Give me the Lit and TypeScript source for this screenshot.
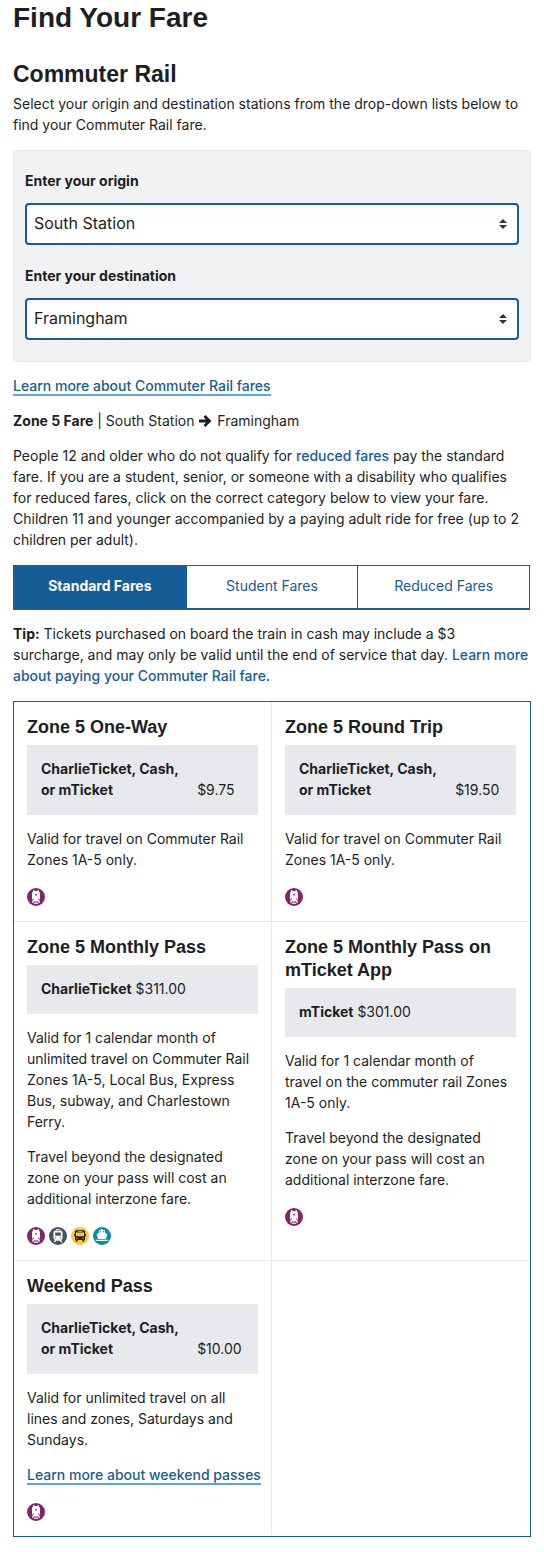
import { LitElement, html, css, svg, TemplateResult } from "lit";
import { customElement, property, state } from "lit/decorators.js";

type Mode = "rail" | "subway" | "bus" | "ferry";

interface Fare {
  name: string;
  media: string;
  price: string;
  split: boolean;
  text: string[];
  link?: string;
  modes: Mode[];
}

const FARES: Fare[] = [
  {
    name: "Zone 5 One-Way",
    media: "CharlieTicket, Cash, or mTicket",
    price: "$9.75",
    split: true,
    text: ["Valid for travel on Commuter Rail Zones 1A-5 only."],
    modes: ["rail"],
  },
  {
    name: "Zone 5 Round Trip",
    media: "CharlieTicket, Cash, or mTicket",
    price: "$19.50",
    split: true,
    text: ["Valid for travel on Commuter Rail Zones 1A-5 only."],
    modes: ["rail"],
  },
  {
    name: "Zone 5 Monthly Pass",
    media: "CharlieTicket",
    price: "$311.00",
    split: false,
    text: [
      "Valid for 1 calendar month of unlimited travel on Commuter Rail Zones 1A-5, Local Bus, Express Bus, subway, and Charlestown Ferry.",
      "Travel beyond the designated zone on your pass will cost an additional interzone fare.",
    ],
    modes: ["rail", "subway", "bus", "ferry"],
  },
  {
    name: "Zone 5 Monthly Pass on mTicket App",
    media: "mTicket",
    price: "$301.00",
    split: false,
    text: [
      "Valid for 1 calendar month of travel\u00a0on the commuter rail Zones 1A-5 only.",
      "Travel beyond the designated zone on your pass will cost an additional interzone fare.",
    ],
    modes: ["rail"],
  },
  {
    name: "Weekend Pass",
    media: "CharlieTicket, Cash, or mTicket",
    price: "$10.00",
    split: true,
    text: ["Valid for unlimited travel on all lines and zones, Saturdays and Sundays."],
    link: "Learn more about weekend passes",
    modes: ["rail"],
  },
];

const GLYPHS: Record<Mode, { label: string; color: string; art: TemplateResult }> = {
  rail: {
    label: "Commuter Rail",
    color: "#80276c",
    art: svg`
      <path fill="#fff" d="M6 2.300h1.500v.7h3v-.7H12v1.200l1 1.500v5.500l-.8 1.300.8 3h-1.400l-.5-1.600H6.900l-.5 1.600H5l.8-3-.8-1.300V5l1-1.500z"/>
      <path fill="#fff" d="M7.300 13.800h3.400v.8H7.300zM6.800 15.300h4.400v.8H6.800z"/>
      <path fill="#80276c" d="M8.200 6h1.600v1.600H8.200zM6 10.500h.9v.9H6zM11.100 10.500h.9v.9h-.9z"/>`,
  },
  subway: {
    label: "Subway",
    color: "#494f5c",
    art: svg`
      <path fill="#fff" d="M7 2.200h4v1.300h1.300L13.500 5v6.600l-1.300 1.300 1.300 2.300h-1.600l-.9-1.500H7l-.9 1.500H4.500l1.300-2.300-1.300-1.300V5l1.200-1.500H7z"/>
      <path fill="#494f5c" d="M7.600 3.200h2.800v.8H7.600zM6.200 5.500h5.600v3.300H6.200zM5.900 10.200h1.200v1.100H5.900zM10.900 10.200h1.200v1.100h-1.200z"/>`,
  },
  bus: {
    label: "Bus",
    color: "#ffc72c",
    art: svg`
      <path fill="#1c1e23" d="M5 3.200h8l1 1.100V6.500h.7v3H14V13h-.7v1.600h-2V13H6.700v1.600h-2V13H4V9.500h-.7v-3H4V4.300z"/>
      <path fill="#ffc72c" d="M6.500 4h5v.7h-5zM5 5.600h8v3.600H5zM5.200 10.800h1.300v1H5.200zM11.500 10.800h1.300v1h-1.300z"/>`,
  },
  ferry: {
    label: "Ferry",
    color: "#008eaa",
    art: svg`
      <path fill="#fff" d="M8 2h2v1.200h2v2.700l2.300 1-1.300 5H5l-1.300-5 2.300-1V3.200h2zM2.800 12.700h12.400v1.400H2.800z"/>
      <path fill="#008eaa" d="M7 4.200h1.200v1H7zM9.800 4.200H11v1H9.800z"/>`,
  },
};

@customElement("mode-icon")
class ModeIcon extends LitElement {
  static styles = css`
    :host {
      display: block;
      width: 18px;
      height: 18px;
    }
    .icon {
      display: block;
      width: 100%;
      height: 100%;
    }
  `;

  @property() mode: Mode = "rail";

  render() {
    const g = GLYPHS[this.mode];
    return html`<svg class="icon" viewBox="0 0 18 18" role="img" aria-label=${g.label}>
      <circle cx="9" cy="9" r="9" fill=${g.color}></circle>
      ${g.art}
    </svg>`;
  }
}

@customElement("fare-card")
class FareCard extends LitElement {
  static styles = css`
    :host {
      display: block;
      padding: 14px 13px 15px;
    }
    .name {
      margin: 0 0 6px;
      font: bold 18px/23px "Liberation Sans", Arial, sans-serif;
    }
    .price {
      margin-bottom: 13px;
      padding: 13px 14px 15px;
      background: #e8e9ed;
    }
    .price.split {
      display: grid;
      grid-template-columns: 10fr 3fr;
      align-items: end;
    }
    .media {
      font-weight: 700;
    }
    .split .media {
      padding-right: 14px;
    }
    .text {
      margin: 0 0 14px;
    }
    .link {
      color: #165c96;
      font-weight: 500;
      text-decoration: none;
      white-space: nowrap;
      box-shadow: 0 2px #5aa5e6;
    }
    .modes {
      display: flex;
      gap: 4px;
      margin-top: 18px;
    }
  `;

  @property({ attribute: false }) fare!: Fare;

  render() {
    const f = this.fare;
    return html`
      <h3 class="name">${f.name}</h3>
      <div class="price ${f.split ? "split" : ""}">
        <span class="media">${f.media}</span>
        <span>${f.price}</span>
      </div>
      ${f.text.map((t) => html`<p class="text">${t}</p>`)}
      ${f.link ? html`<p class="text"><a class="link" href="#weekend">${f.link}</a></p>` : ""}
      <div class="modes">${f.modes.map((m) => html`<mode-icon .mode=${m}></mode-icon>`)}</div>
    `;
  }
}

@customElement("app-root")
class AppRoot extends LitElement {
  static styles = css`
    :host {
      display: block;
      padding: 0 13px 14px;
      color: #1c1e23;
      background: #fff;
      font: 14px/21px Inter, sans-serif;
    }
    .title,
    .subtitle {
      margin: 0;
      font-family: "Liberation Sans", Arial, sans-serif;
      font-weight: bold;
    }
    .title {
      font-size: 28px;
      line-height: 36px;
    }
    .subtitle {
      margin-top: 24px;
      font-size: 23px;
      line-height: 28px;
    }
    .text {
      margin: 0 0 14px;
    }
    .intro {
      margin-top: 5px;
    }
    .form {
      display: flex;
      flex-direction: column;
      gap: 20px;
      margin: 15px 0 13px;
      padding: 19px 11px 21px;
      border: 1px solid #e8e9ed;
      border-radius: 4px;
      background: #f1f2f4;
    }
    .field {
      display: flex;
      flex-direction: column;
      gap: 12px;
    }
    .label,
    .strong {
      font-weight: 700;
    }
    .control {
      display: grid;
      align-items: center;
    }
    .select {
      grid-area: 1 / 1;
      appearance: none;
      width: 100%;
      height: 42px;
      padding: 0 28px 2px 7px;
      border: 2px solid #165c96;
      border-radius: 4px;
      background: #fff;
      color: inherit;
      font: 16px/24px Inter, sans-serif;
    }
    .carets {
      grid-area: 1 / 1;
      justify-self: end;
      width: 8px;
      height: 10px;
      margin-right: 12px;
      fill: #333;
      pointer-events: none;
    }
    .link {
      color: #165c96;
      font-weight: 500;
      text-decoration: none;
    }
    .underlined {
      box-shadow: 0 2px #5aa5e6;
    }
    .arrow {
      width: 13px;
      height: 12px;
      margin: 0 1px;
      vertical-align: -1px;
    }
    .tabs {
      display: grid;
      grid-template-columns: repeat(3, 1fr);
      margin: 15px 1px 13px 0;
      border: solid #165c96;
      border-width: 1px 1px 2px;
    }
    .tab {
      height: 42px;
      padding: 0 0 4px;
      border: 0;
      background: #fff;
      color: #165c96;
      font: inherit;
      cursor: pointer;
    }
    .tab + .tab {
      border-left: 1px solid #165c96;
    }
    .tab.on {
      background: #165c96;
      color: #fff;
      font-weight: 700;
    }
    .fares {
      display: grid;
      grid-template-columns: repeat(2, minmax(0, 1fr));
      margin-top: 15px;
      border: 1px solid #165c96;
    }
    .cell {
      border: solid #e8e9ed;
      border-width: 0 1px 1px 0;
    }
    .cell:nth-child(even) {
      border-right-color: transparent;
    }
    .cell:nth-last-child(-n + 2) {
      border-bottom: 0;
    }
  `;

  @state() private tab = 0;

  private field(id: string, label: string, value: string, other: string) {
    return html`<div class="field">
      <label class="label" for=${id}>${label}</label>
      <div class="control">
        <select class="select" id=${id}>
          <option selected>${value}</option>
          <option>${other}</option>
        </select>
        <svg class="carets" viewBox="0 0 8 10" aria-hidden="true">
          <path d="M4 0l4 4H0zM0 6h8l-4 4z"></path>
        </svg>
      </div>
    </div>`;
  }

  render() {
    const tabs = ["Standard Fares", "Student Fares", "Reduced Fares"];
    return html`
      <h1 class="title">Find Your Fare</h1>
      <h2 class="subtitle">Commuter Rail</h2>
      <p class="text intro">
        Select your origin and destination stations from the drop-down lists below to find your
        Commuter Rail fare.
      </p>
      <form class="form">
        ${this.field("origin", "Enter your origin", "South Station", "Framingham")}
        ${this.field("destination", "Enter your destination", "Framingham", "South Station")}
      </form>
      <p class="text"><a class="link underlined" href="#fares">Learn more about Commuter Rail fares</a></p>
      <p class="text">
        <span class="strong">Zone 5 Fare</span> | South Station
        <svg class="arrow" viewBox="0 0 13 12" role="img" aria-label="to">
          <path d="M0 6h10M5.500 1l5 5-5 5" fill="none" stroke="#1c1e23" stroke-width="2.800"></path>
        </svg>
        Framingham
      </p>
      <p class="text">
        People 12 and older who do not qualify for
        <a class="link" href="#reduced">reduced fares</a> pay the standard fare. If you are a
        student, senior, or someone with a disability who qualifies for&nbsp;reduced fares, click on
        the correct category below to view your fare. Children 11 and younger accompanied by a
        paying adult ride for free (up to 2 children per adult).
      </p>
      <div class="tabs" role="tablist">
        ${tabs.map(
          (t, i) => html`<button
            class="tab ${i === this.tab ? "on" : ""}"
            role="tab"
            aria-selected=${i === this.tab}
            @click=${() => (this.tab = i)}
          >${t}</button>`
        )}
      </div>
      <p class="text">
        <span class="strong">Tip:</span> Tickets purchased on board the train in cash may include a
        $3 surcharge,&nbsp;and may only be valid until the end of service that day.
        <a class="link" href="#paying">Learn more about paying your Commuter Rail fare.</a>
      </p>
      <div class="fares">
        ${FARES.map((f) => html`<div class="cell"><fare-card .fare=${f}></fare-card></div>`)}
        <div class="cell"></div>
      </div>
    `;
  }
}
